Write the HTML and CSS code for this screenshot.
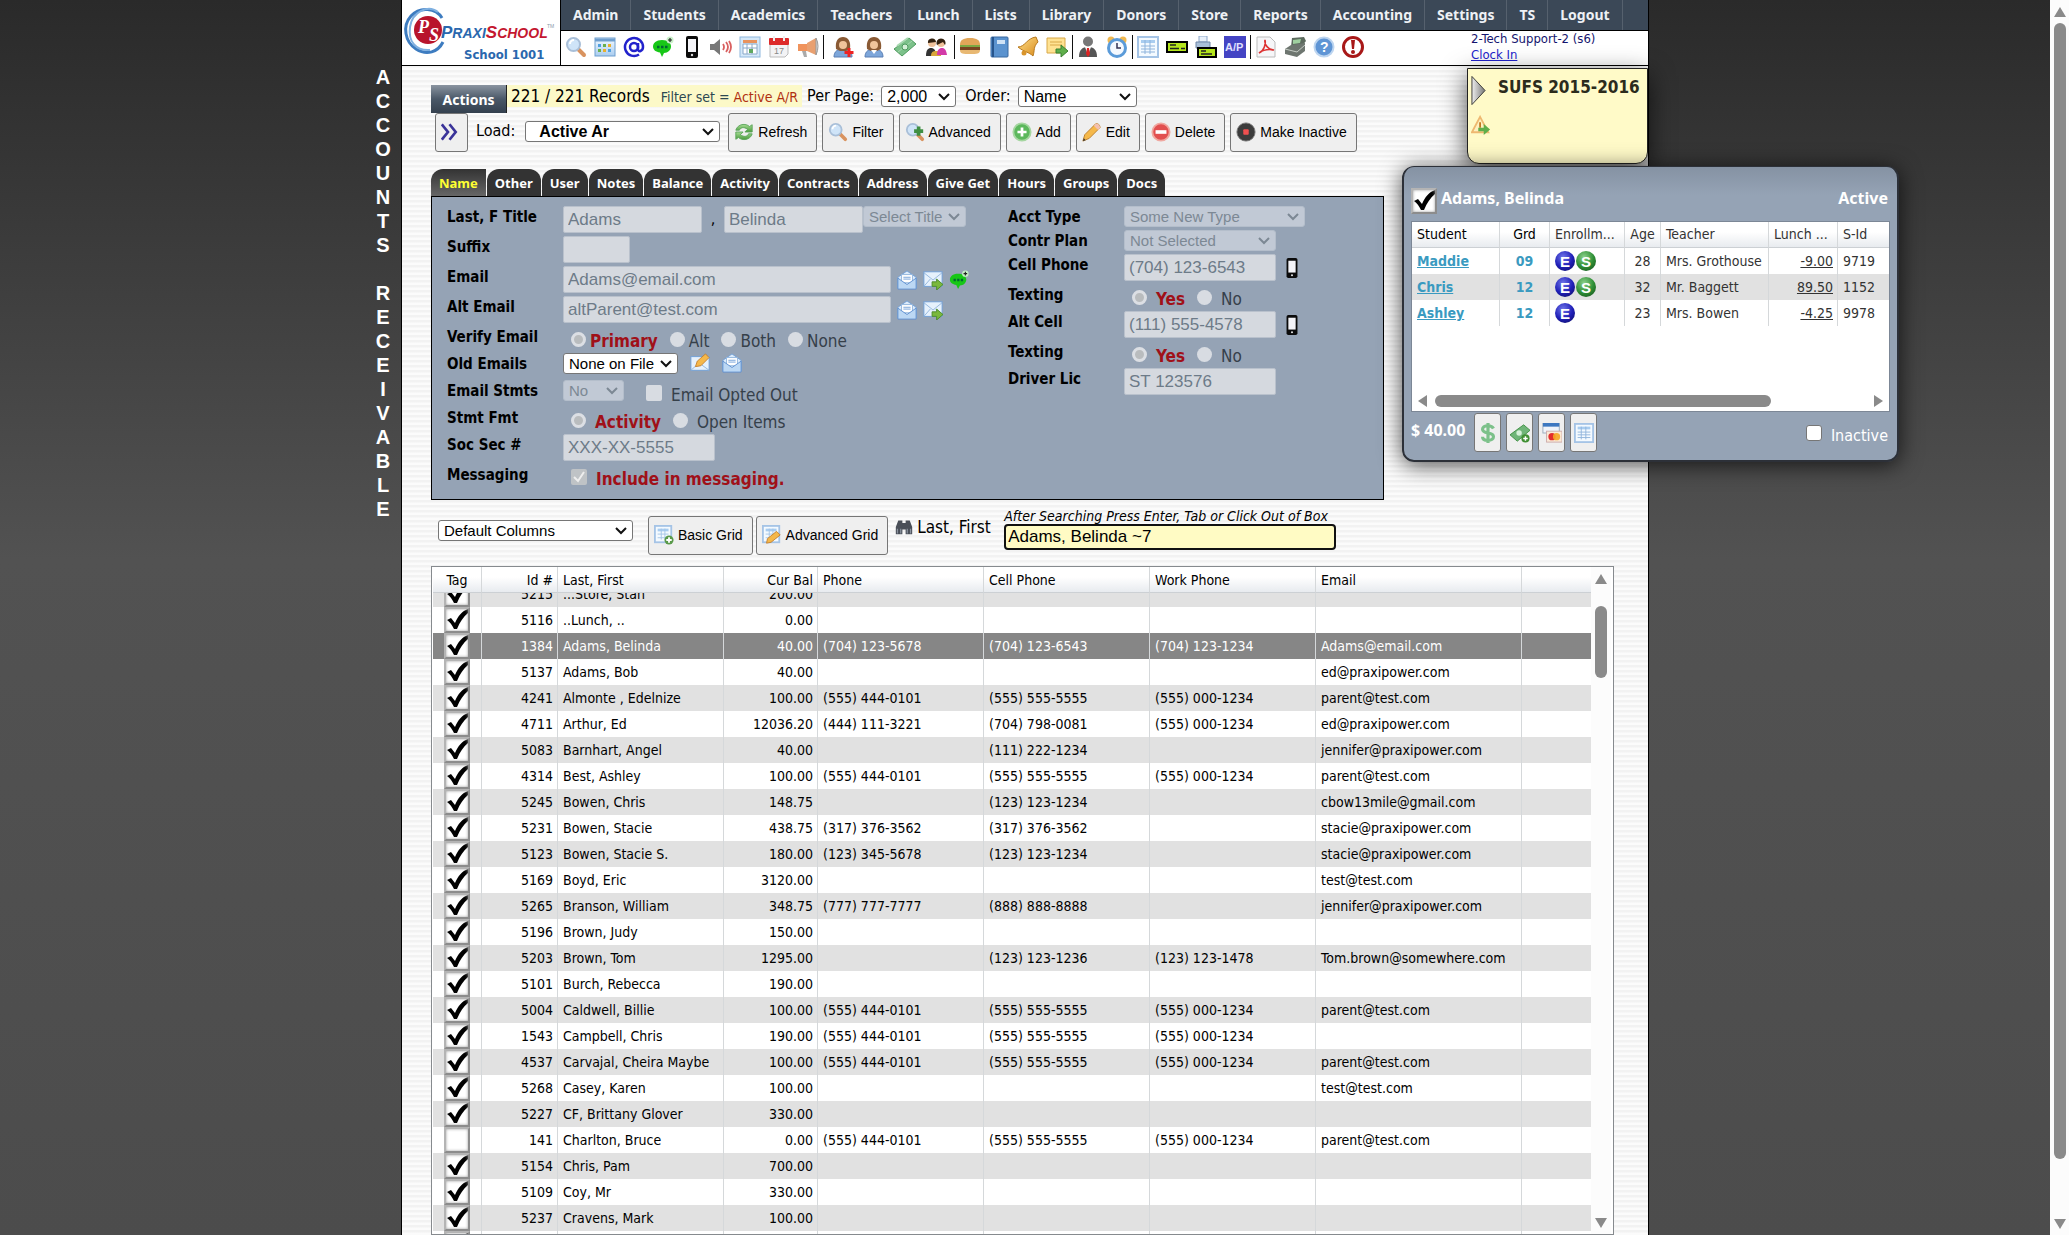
FILE: index.html
```
<!DOCTYPE html>
<html lang="en">
<head>
    <meta charset="UTF-8">
    <meta name="viewport" content="width=device-width, initial-scale=1.0">
    <title>PraxiSchool - Accounts Receivable</title>
    <link rel="stylesheet" href="styles.css">
</head>
<body>
    <svg class="gradients" aria-hidden="true">
        <defs>
            <linearGradient id="gBlue" x1="0" y1="0" x2="0" y2="1"><stop offset="0" stop-color="#f4faff"/><stop offset="1" stop-color="#a9cdf0"/></linearGradient>
            <linearGradient id="gGreen" x1="0" y1="0" x2="0" y2="1"><stop offset="0" stop-color="#a5dc93"/><stop offset="1" stop-color="#4a9a3c"/></linearGradient>
            <linearGradient id="gGold" x1="0" y1="0" x2="1" y2="1"><stop offset="0" stop-color="#ffe08a"/><stop offset="1" stop-color="#d88a1c"/></linearGradient>
            <linearGradient id="gGray" x1="0" y1="0" x2="1" y2="0"><stop offset="0" stop-color="#eee"/><stop offset="1" stop-color="#777"/></linearGradient>
            <radialGradient id="gE" cx="0.4" cy="0.3" r="0.8"><stop offset="0" stop-color="#6f74e8"/><stop offset="0.6" stop-color="#2020b8"/><stop offset="1" stop-color="#101070"/></radialGradient>
            <radialGradient id="gS" cx="0.4" cy="0.3" r="0.8"><stop offset="0" stop-color="#8ad08a"/><stop offset="0.6" stop-color="#2f8f35"/><stop offset="1" stop-color="#1a5a20"/></radialGradient>
        </defs>
    </svg>
    <svg class="sprite" aria-hidden="true">
        <symbol id="i-search" viewBox="0 0 22 22"><path d="M13 13l6 6" stroke="#d9935f" stroke-width="4" stroke-linecap="round"/><circle cx="8.500" cy="8.500" r="6.500" fill="#cfe4f8" stroke="#a9bfd8" stroke-width="2"/><path d="M5 8a4 4 0 0 1 4-4" stroke="#fff" stroke-width="2" fill="none"/></symbol>
        <symbol id="i-searchplus" viewBox="0 0 22 22"><path d="M13 13l6 6" stroke="#d9935f" stroke-width="4" stroke-linecap="round"/><circle cx="8.500" cy="8.500" r="6.500" fill="#cfe4f8" stroke="#a9bfd8" stroke-width="2"/><path d="M15 5v10M10 10h10" stroke="#3f8f43" stroke-width="4"/></symbol>
        <symbol id="i-apps" viewBox="0 0 22 22"><rect x="1" y="2" width="20" height="18" fill="url(#gBlue)" stroke="#6f9fcf"/><path d="M1 4h20" stroke="#6f9fcf" stroke-width="3"/><path d="M4 8h3v3H4zM14 13h3v3h-3z" fill="#4fa0e0"/><path d="M9 8h3v3H9zM4 13h3v3H4z" fill="#6ab04a"/><path d="M14 8h3v3h-3zM9 13h3v3H9z" fill="#e8b030"/></symbol>
        <symbol id="i-at" viewBox="0 0 22 22"><circle cx="11" cy="11" r="4" fill="none" stroke="#2222cc" stroke-width="2.500"/><path d="M15 7v6c0 4 5 2 5-2a9 9 0 1 0-4 7.500" fill="none" stroke="#2222cc" stroke-width="2.500"/></symbol>
        <symbol id="i-chat" viewBox="0 0 22 22"><path d="M10 4c6 0 9 3 9 6.500S16 17 12 17l-2 4-2-4.500C4 16 1 14 1 10.500S4 4 10 4z" fill="#17c717"/><path d="M5 11h2.500M9 11h2.500M13 11h2.500" stroke="#063" stroke-width="2.500"/><circle cx="18" cy="4" r="3.500" fill="#c8f0c8"/><path d="M18 2v4M16 4h4" stroke="#222" stroke-width="1.200"/></symbol>
        <symbol id="i-phone" viewBox="0 0 22 22"><rect x="5" y="0" width="12" height="22" rx="2" fill="#0b0b0b"/><path d="M7 3h8v13H7z" fill="#f4f4f8"/><circle cx="11" cy="19" r="1.200" fill="#ddd"/></symbol>
        <symbol id="i-sound" viewBox="0 0 22 22"><path d="M0 8h4l6-5v16l-6-5H0z" fill="#777"/><path d="M13 8q2 3 0 6M16 6q4 5 0 10M19 5q4 6 0 12" fill="none" stroke="#d96060" stroke-width="1.800"/></symbol>
        <symbol id="i-calblue" viewBox="0 0 22 22"><rect x="1" y="1" width="20" height="20" fill="#d5e8f8" stroke="#8fb8de"/><path d="M4 4h14v3H4z" fill="#e8925c"/><path d="M4 8h14v10H4z" fill="#fff" stroke="#8aa8c8"/><path d="M4 12h14M8 8v10M13 8v10" stroke="#8aa8c8"/><path d="M10 13h4v4h-4z" fill="#5fa860"/></symbol>
        <symbol id="i-cal" viewBox="0 0 22 22"><path d="M2 7h18v11l-3 3H2z" fill="#f3f3f5" stroke="#bbb"/><rect x="1" y="2" width="20" height="7" rx="1" fill="#dd2b2b"/><path d="M6 0v5M16 0v5" stroke="#eee" stroke-width="2"/><text x="6" y="18" font-size="9" font-family="Liberation Sans" fill="#888">17</text></symbol>
        <symbol id="i-horn" viewBox="0 0 22 22"><path d="M1 8h9v7H1z" fill="#f0935c"/><path d="M10 7l9-5v17l-9-4z" fill="#e9a070"/><path d="M19 2q4 8 0 17z" fill="#ddd" stroke="#999"/><path d="M5 15h4l1 6H7z" fill="#aaa"/></symbol>
        <symbol id="i-user" viewBox="0 0 22 22"><path d="M2 21c0-6 4-8 9-8s9 2 9 8z" fill="#7da6da" stroke="#5a7fb4"/><path d="M4 13C3 5 6 1 11 1s8 4 7 12l-4 2H8z" fill="#8a5a34"/><circle cx="11" cy="9" r="4" fill="#f0c49b"/><path d="M8 14l3 4 3-4z" fill="#fff"/></symbol>
        <symbol id="i-useradd" viewBox="0 0 22 22"><path d="M2 21c0-6 4-8 9-8s9 2 9 8z" fill="#7da6da" stroke="#5a7fb4"/><path d="M4 13C3 5 6 1 11 1s8 4 7 12l-4 2H8z" fill="#8a5a34"/><circle cx="11" cy="9" r="4" fill="#f0c49b"/><path d="M17 12v9M12.500 16.500h9" stroke="#e22" stroke-width="3"/></symbol>
        <symbol id="i-money" viewBox="0 0 22 22"><path d="M0 13L15 2l7 6L8 20z" fill="#7cc18a" stroke="#4f9a5e"/><path d="M3 10L14 2" stroke="#a7d9b0" stroke-width="2"/><path d="M4 16L18 5" stroke="#a7d9b0"/><circle cx="11" cy="11" r="3" fill="#d5f0d8" stroke="#4f9a5e"/></symbol>
        <symbol id="i-moneyadd" viewBox="0 0 22 22"><path d="M0 13L15 2l7 6L8 20z" fill="#6fb578" stroke="#3f8f43"/><circle cx="10" cy="11" r="3" fill="#d5f0d8"/><circle cx="17" cy="17" r="4.500" fill="#3f8f33"/><path d="M17 14.500v5M14.500 17h5" stroke="#fff" stroke-width="1.600"/></symbol>
        <symbol id="i-family" viewBox="0 0 22 22"><path d="M1 20c0-6 2-8 5-8s5 2 5 8z" fill="#333"/><path d="M6 20c0-4 2-5 5-5s5 1 5 5z" fill="#d9a53a"/><path d="M12 19c0-5 2-7 5-7s4 2 5 7z" fill="#d33aa8"/><circle cx="7" cy="7" r="4" fill="#efc19a"/><circle cx="16" cy="7" r="4" fill="#efc19a"/><path d="M3 7a4 4 0 0 1 8-1zM12 9a4.500 4.500 0 1 1 8 0l-2-3z" fill="#321"/></symbol>
        <symbol id="i-burger" viewBox="0 0 22 22"><path d="M1 9c0-5 3-7 10-7s10 2 10 7z" fill="#e2a659"/><path d="M1 9h20v2H1z" fill="#7da844"/><path d="M1 11h20v3H1z" fill="#7a4522"/><path d="M1 14h20c0 4-3 4-10 4S1 18 1 14z" fill="#e8b872"/></symbol>
        <symbol id="i-book" viewBox="0 0 22 22"><rect x="3" y="1" width="17" height="20" rx="1" fill="#5b93cf" stroke="#3868a0"/><path d="M5 1v20" stroke="#27558c" stroke-width="2"/><rect x="9" y="4" width="8" height="4" fill="#cfe2f5"/></symbol>
        <symbol id="i-bell" viewBox="0 0 22 22"><path d="M1 11C8 11 10 2 19 1l2 5c-5 5-3 8-5 14C12 16 7 16 1 11z" fill="url(#gGold)" stroke="#b8791c"/><circle cx="7" cy="17" r="2.500" fill="#d9952c"/></symbol>
        <symbol id="i-notego" viewBox="0 0 22 22"><path d="M1 2h18v11l-5 4H1z" fill="#ffe292" stroke="#d8a848"/><path d="M4 6h12M4 9h12" stroke="#d8a848"/><path d="M10 13h5v-4l7 6-7 6v-4h-5z" fill="#5fae4a" stroke="#3a8030"/></symbol>
        <symbol id="i-suit" viewBox="0 0 22 22"><path d="M2 21c0-7 3-10 9-10s9 3 9 10z" fill="#555"/><path d="M8 11h6l-3 8z" fill="#fff"/><path d="M10 12h2l1 6-2 3-2-3z" fill="#d22"/><circle cx="11" cy="5.500" r="5" fill="#777"/></symbol>
        <symbol id="i-clock" viewBox="0 0 22 22"><circle cx="5" cy="4" r="3.500" fill="#f0b850"/><circle cx="17" cy="4" r="3.500" fill="#f0b850"/><circle cx="11" cy="12" r="8.500" fill="#f4f9ff" stroke="#5b9bd9" stroke-width="3"/><path d="M11 7v5h4" fill="none" stroke="#335" stroke-width="1.500"/></symbol>
        <symbol id="i-table" viewBox="0 0 22 22"><rect x="1" y="1" width="20" height="20" fill="#f4faff" stroke="#a5c4e6" stroke-width="2"/><path d="M4 4h14v3H4z" fill="#a9cdf0"/><path d="M4 10h14M4 13h14M4 16h14M8 4v14M13 4v14" stroke="#8fb4dc"/></symbol>
        <symbol id="i-check" viewBox="0 0 22 22"><rect x="1" y="6" width="20" height="10" fill="#b5e61d" stroke="#000" stroke-width="2"/><path d="M4 9h6M4 12.500h9M15 12.500h4" stroke="#222" stroke-width="1.500"/></symbol>
        <symbol id="i-printcheck" viewBox="0 0 22 22"><path d="M4 0h8v6H4z" fill="#e8f0fa" stroke="#8aa5c8"/><path d="M1 6h14v6H1z" fill="#a9bfd8" stroke="#7088a8"/><rect x="3" y="12" width="18" height="9" fill="#b5e61d" stroke="#000" stroke-width="2"/><path d="M6 15h5M6 18h11" stroke="#222" stroke-width="1.500"/></symbol>
        <symbol id="i-ap" viewBox="0 0 22 22"><rect width="22" height="22" fill="#4444c4"/><text x="1" y="15" font-size="11" font-weight="bold" font-family="Liberation Sans" fill="#e0e0ff">A/P</text></symbol>
        <symbol id="i-pdf" viewBox="0 0 22 22"><path d="M2 1h13l5 5v15H2z" fill="#f6f6f8" stroke="#bbb"/><path d="M4 17C9 15 11 8 10 4c-1 5 4 10 9 10-5-1-11 0-15 3z" fill="none" stroke="#d33" stroke-width="1.600"/></symbol>
        <symbol id="i-register" viewBox="0 0 22 22"><path d="M8 2l12-1 2 4-4 5-11 1z" fill="#5c6a5e"/><path d="M9 4l8-1-1 4-7 1z" fill="#9fcf9f"/><path d="M1 13l6-4 14-2v8l-8 6-12-3z" fill="#6e7670"/><path d="M1 13l12 3 8-7" stroke="#c5ccc5" fill="none"/></symbol>
        <symbol id="i-help" viewBox="0 0 22 22"><circle cx="11" cy="11" r="9.500" fill="#5f95d5" stroke="#bdd5f0" stroke-width="2"/><text x="7" y="16" font-size="14" font-weight="bold" font-family="Liberation Sans" fill="#fff">?</text></symbol>
        <symbol id="i-alert" viewBox="0 0 22 22"><circle cx="11" cy="11" r="9.500" fill="#fff" stroke="#a81818" stroke-width="3"/><path d="M9 4h4l-1 9h-2z" fill="#a81818"/><circle cx="11" cy="16" r="2" fill="#a81818"/></symbol>
        <symbol id="i-arrows" viewBox="0 0 22 22"><path d="M1 1l8 10-8 10M11 1l8 10-8 10" fill="none" stroke="#3a3399" stroke-width="3.500"/></symbol>
        <symbol id="i-refresh" viewBox="0 0 22 22"><path d="M2 9c2-7 11-8 15-4l3-2v8h-8l3-3c-4-3-8-2-9 1z" fill="url(#gGreen)" stroke="#5aa55a"/><path d="M20 13c-2 7-11 8-15 4l-3 2v-8h8l-3 3c4 3 8 2 9-1z" fill="url(#gGreen)" stroke="#5aa55a"/></symbol>
        <symbol id="i-add" viewBox="0 0 22 22"><circle cx="11" cy="11" r="9.500" fill="#5cb85c" stroke="#a5d6a0" stroke-width="2"/><path d="M11 6v10M6 11h10" stroke="#fff" stroke-width="3"/></symbol>
        <symbol id="i-delete" viewBox="0 0 22 22"><circle cx="11" cy="11" r="9.500" fill="#e25050" stroke="#f0a8a0" stroke-width="2"/><path d="M5 11h12" stroke="#fff" stroke-width="4"/></symbol>
        <symbol id="i-stop" viewBox="0 0 22 22"><circle cx="11" cy="11" r="10" fill="#3c3c3c" stroke="#777"/><rect x="8" y="8" width="6" height="6" rx="1" fill="#f05050"/></symbol>
        <symbol id="i-pencil" viewBox="0 0 22 22"><path d="M1 21l2-7L15 2q4-1 5 4L8 18z" fill="#f5b84a" stroke="#b87a28"/><path d="M13 4l5 5 2-3q-1-5-5-4z" fill="#f2c0b0"/><path d="M1 21l1-3 2 2z" fill="#333"/></symbol>
        <symbol id="i-tableadd" viewBox="0 0 22 22"><rect x="1" y="1" width="18" height="18" fill="#f4faff" stroke="#a5c4e6" stroke-width="2"/><path d="M4 4h12v3H4z" fill="#a9cdf0"/><path d="M4 10h12M4 14h12M8 4v12M12 4v12" stroke="#a5c4e6"/><circle cx="16.500" cy="16.500" r="5" fill="#5a9a4a"/><path d="M16.500 13.500v6M13.500 16.500h6" stroke="#fff" stroke-width="2"/></symbol>
        <symbol id="i-tableedit" viewBox="0 0 22 22"><rect x="1" y="1" width="18" height="18" fill="#f4faff" stroke="#a5c4e6" stroke-width="2"/><path d="M4 4h12v3H4z" fill="#a9cdf0"/><path d="M4 10h12M4 14h12M8 4v12M12 4v12" stroke="#a5c4e6"/><path d="M5 20l1-5L16 7l4 4-10 8z" fill="#f5b84a" stroke="#c58030"/></symbol>
        <symbol id="i-mail" viewBox="0 0 22 22"><path d="M1 8l10-7 10 7v12H1z" fill="#dcebfa" stroke="#6f9fd8"/><path d="M5 5h12v9H5z" fill="#fff" stroke="#8fb4dc"/><path d="M7 8h8M7 10h8" stroke="#6f9fd8"/><path d="M1 9l10 7 10-7v12H1z" fill="#bcd8f4" stroke="#5f8fd0"/></symbol>
        <symbol id="i-mailgo" viewBox="0 0 22 22"><rect x="1" y="2" width="20" height="16" fill="#e6f1fc" stroke="#6f9fd8"/><path d="M1 3l10 8 10-8M1 18l7-8M21 18l-7-8" fill="none" stroke="#8fb4dc"/><path d="M10 13h5v-3l7 6-7 6v-4h-5z" fill="#7ab83c" stroke="#4a8a28"/></symbol>
        <symbol id="i-mailedit" viewBox="0 0 22 22"><rect x="1" y="4" width="20" height="15" fill="#e6f1fc" stroke="#6f9fd8"/><path d="M1 19l9-8 11 8" fill="none" stroke="#8fb4dc"/><path d="M6 15l2-6L17 1l4 4-9 9z" fill="#f5b84a" stroke="#c58030"/></symbol>
        <symbol id="i-binoc" viewBox="0 0 22 22"><path d="M4 3h5v3h4V3h5l3 8v9h-8v-6H9v6H1v-9z" fill="#4a4f58"/><path d="M3 13v6M7 13v6M15 13v6M19 13v6" stroke="#8a929e" stroke-width="1.500"/></symbol>
        <symbol id="i-dollar" viewBox="0 0 22 22"><path d="M17 6c-1-2-3-3-6-3-4 0-6 2-6 4 0 6 12 2 12 8 0 2-2 4-6 4-3 0-6-1-6-4M11 0v22" fill="none" stroke="#7cc18a" stroke-width="3.500"/></symbol>
        <symbol id="i-cards" viewBox="0 0 22 22"><rect x="1" y="0" width="18" height="11" fill="#f0f4fa" stroke="#9ab"/><path d="M1 0h18v4H1z" fill="#3d78c0"/><rect x="5" y="9" width="17" height="12" fill="#fbe9d5" stroke="#caa"/><circle cx="11" cy="15" r="4" fill="#e22c2c"/><circle cx="16" cy="15" r="4" fill="#f5a623" opacity="0.900"/></symbol>
        <symbol id="i-warngo" viewBox="0 0 22 22"><path d="M10 2l9 17H1z" fill="#fdf0c0" stroke="#eeb870" stroke-width="2"/><path d="M10 8v6" stroke="#c07820" stroke-width="2"/><path d="M8 14h6v-4l7 6-7 6v-4H8z" fill="#5fae4a"/></symbol>
        <symbol id="i-play" viewBox="0 0 16 32"><path d="M1 1l14 15L1 31z" fill="url(#gGray)" stroke="#333"/></symbol>
        <symbol id="i-e" viewBox="0 0 20 20"><circle cx="10" cy="10" r="10" fill="url(#gE)"/><text x="5" y="15.500" font-size="15" font-weight="bold" font-family="Liberation Sans" fill="#fff">E</text></symbol>
        <symbol id="i-s" viewBox="0 0 20 20"><circle cx="10" cy="10" r="10" fill="url(#gS)"/><text x="5" y="15.500" font-size="15" font-weight="bold" font-family="Liberation Sans" fill="#fff">S</text></symbol>
    </svg>

    <div class="page">
        <aside class="gutter">
            <div class="side-title">A
C
C
O
U
N
T
S

R
E
C
E
I
V
A
B
L
E</div>
        </aside>

        <div class="column">
            <header>
                <div class="logo">
                    <svg width="156" height="62" viewBox="0 0 156 62" role="img" aria-label="PraxiSchool School 1001">
                        <circle cx="26" cy="30" r="14" fill="#b8142c"/>
                        <path d="M40 18C34 8 18 6 9 16S3 42 14 49s22 3 27-7" fill="none" stroke="#3d7cc0" stroke-width="3"/>
                        <path d="M36 12C26 4 10 12 8 27s6 24 20 23" fill="none" stroke="#7fb0e0" stroke-width="2"/>
                        <text class="logo-mark" x="16" y="33">P</text>
                        <text class="logo-mark" x="27" y="41">S</text>
                        <text class="logo-word" x="39" y="38"><tspan fill="#2a67ad">P</tspan><tspan class="logo-small" fill="#2a67ad">RAXI</tspan><tspan fill="#c4172f">S</tspan><tspan class="logo-small" fill="#c4172f">CHOOL</tspan></text>
                        <text class="logo-tm" x="145" y="28">TM</text>
                        <text class="logo-school" x="62" y="59">School 1001</text>
                    </svg>
                </div>
                <div class="header-main">
                    <nav>
                        <a href="#">Admin</a>
                        <a href="#">Students</a>
                        <a href="#">Academics</a>
                        <a href="#">Teachers</a>
                        <a href="#">Lunch</a>
                        <a href="#">Lists</a>
                        <a href="#">Library</a>
                        <a href="#">Donors</a>
                        <a href="#">Store</a>
                        <a href="#">Reports</a>
                        <a href="#">Accounting</a>
                        <a href="#">Settings</a>
                        <a href="#">TS</a>
                        <a href="#">Logout</a>
                    </nav>
                    <div class="icon-row">
                        <div class="icon-group">
                            <button title="Search"><svg><use href="#i-search"/></svg></button>
                            <button title="Dashboard"><svg><use href="#i-apps"/></svg></button>
                            <button title="Email"><svg><use href="#i-at"/></svg></button>
                            <button title="Chat"><svg><use href="#i-chat"/></svg></button>
                            <button title="Text"><svg><use href="#i-phone"/></svg></button>
                            <button title="Voice"><svg><use href="#i-sound"/></svg></button>
                            <button title="Schedule"><svg><use href="#i-calblue"/></svg></button>
                            <button title="Calendar"><svg><use href="#i-cal"/></svg></button>
                            <button title="Announce"><svg><use href="#i-horn"/></svg></button>
                        </div>
                        <div class="icon-group people">
                            <button title="Add Student"><svg><use href="#i-useradd"/></svg></button>
                            <button title="Student"><svg><use href="#i-user"/></svg></button>
                            <button title="Payments"><svg><use href="#i-money"/></svg></button>
                            <button title="Family"><svg><use href="#i-family"/></svg></button>
                        </div>
                        <div class="icon-group">
                            <button title="Lunch"><svg><use href="#i-burger"/></svg></button>
                            <button title="Library"><svg><use href="#i-book"/></svg></button>
                            <button title="Bell"><svg><use href="#i-bell"/></svg></button>
                            <button title="Notes"><svg><use href="#i-notego"/></svg></button>
                        </div>
                        <div class="icon-group">
                            <button title="Staff"><svg><use href="#i-suit"/></svg></button>
                            <button title="Time Clock"><svg><use href="#i-clock"/></svg></button>
                        </div>
                        <div class="icon-group">
                            <button title="Ledger"><svg><use href="#i-table"/></svg></button>
                            <button title="Checks"><svg><use href="#i-check"/></svg></button>
                            <button title="Print Checks"><svg><use href="#i-printcheck"/></svg></button>
                            <button title="Payables"><svg><use href="#i-ap"/></svg></button>
                        </div>
                        <div class="icon-group">
                            <button title="PDF"><svg><use href="#i-pdf"/></svg></button>
                            <button title="Register"><svg><use href="#i-register"/></svg></button>
                            <button title="Help"><svg><use href="#i-help"/></svg></button>
                            <button title="Alert"><svg><use href="#i-alert"/></svg></button>
                        </div>
                        <div class="login">
                            <div>2-Tech Support-2 (s6)</div>
                            <a href="#">Clock In</a>
                        </div>
                    </div>
                </div>
            </header>

            <main>
                <div class="toolbar">
                    <button class="actions">Actions</button>
                    <div class="records">221 / 221 Records <span class="filter">Filter set = <b>Active A/R</b></span></div>
                    <label for="perPage">Per Page:</label>
                    <select id="perPage" class="per-page"><option>2,000</option></select>
                    <label for="order">Order:</label>
                    <select id="order" class="order"><option>Name</option></select>
                </div>
                <div class="buttons">
                    <button class="btn more" title="More"><svg><use href="#i-arrows"/></svg></button>
                    <label for="load">Load:</label>
                    <select id="load" class="load"><option>Active Ar</option></select>
                    <button class="btn"><svg><use href="#i-refresh"/></svg>Refresh</button>
                    <button class="btn"><svg><use href="#i-search"/></svg>Filter</button>
                    <button class="btn"><svg><use href="#i-searchplus"/></svg>Advanced</button>
                    <button class="btn"><svg><use href="#i-add"/></svg>Add</button>
                    <button class="btn"><svg><use href="#i-pencil"/></svg>Edit</button>
                    <button class="btn"><svg><use href="#i-delete"/></svg>Delete</button>
                    <button class="btn"><svg><use href="#i-stop"/></svg>Make Inactive</button>
                </div>

                <div class="tabs">
                    <button class="active">Name</button>
                    <button>Other</button>
                    <button>User</button>
                    <button>Notes</button>
                    <button>Balance</button>
                    <button>Activity</button>
                    <button>Contracts</button>
                    <button>Address</button>
                    <button>Give Get</button>
                    <button>Hours</button>
                    <button>Groups</button>
                    <button>Docs</button>
                </div>

                <form class="panel">
                    <div class="fields">
                        <div class="row">
                            <label for="last">Last, F Title</label>
                            <input type="text" id="last" class="w-name" value="Adams" disabled>
                            <span class="comma">,</span>
                            <input type="text" class="w-name" aria-label="First" value="Belinda" disabled>
                            <select class="w-title" aria-label="Title" disabled><option>Select Title</option></select>
                        </div>
                        <div class="row">
                            <label for="suffix">Suffix</label>
                            <input type="text" id="suffix" class="w-suffix" disabled>
                        </div>
                        <div class="row">
                            <label for="email">Email</label>
                            <input type="text" id="email" class="w-email" value="Adams@email.com" disabled>
                            <svg class="ic"><use href="#i-mail"/></svg>
                            <svg class="ic"><use href="#i-mailgo"/></svg>
                            <svg class="ic"><use href="#i-chat"/></svg>
                        </div>
                        <div class="row">
                            <label for="altEmail">Alt Email</label>
                            <input type="text" id="altEmail" class="w-email" value="altParent@test.com" disabled>
                            <svg class="ic"><use href="#i-mail"/></svg>
                            <svg class="ic"><use href="#i-mailgo"/></svg>
                        </div>
                        <div class="row short">
                            <span class="name">Verify Email</span>
                            <label class="choice on"><input type="radio" name="verify" checked disabled>Primary</label>
                            <label class="choice"><input type="radio" name="verify" disabled>Alt</label>
                            <label class="choice"><input type="radio" name="verify" disabled>Both</label>
                            <label class="choice"><input type="radio" name="verify" disabled>None</label>
                        </div>
                        <div class="row short">
                            <label for="oldEmails">Old Emails</label>
                            <select id="oldEmails" class="w-old"><option>None on File</option></select>
                            <svg class="ic spaced"><use href="#i-mailedit"/></svg>
                            <svg class="ic spaced"><use href="#i-mail"/></svg>
                        </div>
                        <div class="row short">
                            <label for="stmts">Email Stmts</label>
                            <select id="stmts" class="w-no" disabled><option>No</option></select>
                            <label class="choice wide after-select"><input type="checkbox" disabled>Email Opted Out</label>
                        </div>
                        <div class="row short">
                            <span class="name">Stmt Fmt</span>
                            <label class="choice wide on"><input type="radio" name="fmt" checked disabled>Activity</label>
                            <label class="choice wide"><input type="radio" name="fmt" disabled>Open Items</label>
                        </div>
                        <div class="row">
                            <label for="ssn">Soc Sec #</label>
                            <input type="text" id="ssn" class="w-phone" value="XXX-XX-5555" disabled>
                        </div>
                        <div class="row">
                            <span class="name">Messaging</span>
                            <label class="choice wide on"><input type="checkbox" checked disabled>Include in messaging.</label>
                        </div>
                    </div>
                    <div class="fields contact">
                        <div class="row tight">
                            <label for="acctType">Acct Type</label>
                            <select id="acctType" class="w-acct" disabled><option>Some New Type</option></select>
                        </div>
                        <div class="row tight">
                            <label for="contrPlan">Contr Plan</label>
                            <select id="contrPlan" class="w-phone" disabled><option>Not Selected</option></select>
                        </div>
                        <div class="row">
                            <label for="cell">Cell Phone</label>
                            <input type="text" id="cell" class="w-phone" value="(704) 123-6543" disabled>
                            <svg class="ic"><use href="#i-phone"/></svg>
                        </div>
                        <div class="row short">
                            <span class="name">Texting</span>
                            <label class="choice wide on"><input type="radio" name="text1" checked disabled>Yes</label>
                            <label class="choice wide"><input type="radio" name="text1" disabled>No</label>
                        </div>
                        <div class="row">
                            <label for="altCell">Alt Cell</label>
                            <input type="text" id="altCell" class="w-phone" value="(111) 555-4578" disabled>
                            <svg class="ic"><use href="#i-phone"/></svg>
                        </div>
                        <div class="row short">
                            <span class="name">Texting</span>
                            <label class="choice wide on"><input type="radio" name="text2" checked disabled>Yes</label>
                            <label class="choice wide"><input type="radio" name="text2" disabled>No</label>
                        </div>
                        <div class="row">
                            <label for="license">Driver Lic</label>
                            <input type="text" id="license" class="w-phone" value="ST 123576" disabled>
                        </div>
                    </div>
                </form>

                <div class="grid-bar">
                    <select class="columns" aria-label="Columns"><option>Default Columns</option></select>
                    <div class="grid-buttons">
                        <button class="btn"><svg><use href="#i-tableadd"/></svg>Basic Grid</button>
                        <button class="btn"><svg><use href="#i-tableedit"/></svg>Advanced Grid</button>
                    </div>
                    <label class="find" for="find"><svg><use href="#i-binoc"/></svg>Last, First</label>
                    <div class="find-box">
                        <i>After Searching Press Enter, Tab or Click Out of Box</i>
                        <input type="text" id="find" value="Adams, Belinda ~7">
                    </div>
                </div>

                <div class="grid">
                    <div class="grid-scroll" id="gridScroll">
                        <table>
                            <colgroup>
                                <col class="c-tag"><col class="c-id"><col class="c-name"><col class="c-bal">
                                <col class="c-phone"><col class="c-phone"><col class="c-phone"><col class="c-email"><col>
                            </colgroup>
                            <thead>
                                <tr>
                                    <th class="center">Tag</th>
                                    <th class="num">Id #</th>
                                    <th>Last, First</th>
                                    <th class="num">Cur Bal</th>
                                    <th>Phone</th>
                                    <th>Cell Phone</th>
                                    <th>Work Phone</th>
                                    <th>Email</th>
                                    <th></th>
                                </tr>
                            </thead>
                            <tbody id="accounts"></tbody>
                        </table>
                    </div>
                    <div class="vbar">
                        <span class="up"></span>
                        <span class="thumb"></span>
                        <span class="down"></span>
                    </div>
                </div>
            </main>

            <div class="note">
                <svg class="play"><use href="#i-play"/></svg>
                <b>SUFS 2015-2016</b>
                <svg class="ic"><use href="#i-warngo"/></svg>
            </div>

            <section class="popup">
                <div class="popup-head">
                    <input type="checkbox" class="tag" id="popupTag" checked>
                    <label for="popupTag">Adams, Belinda</label>
                    <span>Active</span>
                </div>
                <div class="students">
                    <table>
                        <colgroup>
                            <col class="s-name"><col class="s-grade"><col class="s-enroll"><col class="s-age">
                            <col class="s-teacher"><col class="s-lunch"><col>
                        </colgroup>
                        <thead>
                            <tr>
                                <th class="dark">Student</th>
                                <th class="dark center">Grd</th>
                                <th>Enrollm...</th>
                                <th class="center">Age</th>
                                <th>Teacher</th>
                                <th>Lunch ...</th>
                                <th>S-Id</th>
                            </tr>
                        </thead>
                        <tbody>
                            <tr>
                                <td><a href="#">Maddie</a></td>
                                <td class="grade">09</td>
                                <td><svg><use href="#i-e"/></svg><svg><use href="#i-s"/></svg></td>
                                <td class="center">28</td>
                                <td>Mrs. Grothouse</td>
                                <td class="num"><u>-9.00</u></td>
                                <td>9719</td>
                            </tr>
                            <tr>
                                <td><a href="#">Chris</a></td>
                                <td class="grade">12</td>
                                <td><svg><use href="#i-e"/></svg><svg><use href="#i-s"/></svg></td>
                                <td class="center">32</td>
                                <td>Mr. Baggett</td>
                                <td class="num"><u>89.50</u></td>
                                <td>1152</td>
                            </tr>
                            <tr>
                                <td><a href="#">Ashley</a></td>
                                <td class="grade">12</td>
                                <td><svg><use href="#i-e"/></svg></td>
                                <td class="center">23</td>
                                <td>Mrs. Bowen</td>
                                <td class="num"><u>-4.25</u></td>
                                <td>9978</td>
                            </tr>
                        </tbody>
                    </table>
                    <div class="hbar">
                        <span class="left"></span>
                        <div class="track"><span class="thumb"></span></div>
                        <span class="right"></span>
                    </div>
                </div>
                <div class="popup-foot">
                    <b>$ 40.00</b>
                    <button class="btn" title="Payment"><svg><use href="#i-dollar"/></svg></button>
                    <button class="btn" title="Add Payment"><svg><use href="#i-moneyadd"/></svg></button>
                    <button class="btn" title="Card"><svg><use href="#i-cards"/></svg></button>
                    <button class="btn" title="Ledger"><svg><use href="#i-table"/></svg></button>
                    <label class="inactive"><input type="checkbox">Inactive</label>
                </div>
            </section>
        </div>

        <div class="gutter"></div>
        <div class="vbar page-bar">
            <span class="up"></span>
            <span class="thumb"></span>
            <span class="down"></span>
        </div>
    </div>
    <script src="script.js"></script>
</body>
</html>
```

FILE: styles.css
```
* {
    box-sizing: border-box;
}
body {
    font-family: "DejaVu Sans Condensed", "Noto Sans", Tahoma, sans-serif;
    font-size: 14px;
    margin: 0;
    background: #4c4c4c linear-gradient(#2a2a2a, #525252 560px, #4c4c4c);
    color: #000;
}
.gradients {
    position: absolute;
    width: 0;
    height: 0;
}
.sprite {
    display: none;
}
button, input, select {
    font-family: "Liberation Sans", Arial, sans-serif;
    margin: 0;
}
.page {
    display: flex;
    height: 100vh;
    overflow: hidden;
}
.gutter {
    flex: 1;
}
.side-title {
    white-space: pre-line;
    text-align: center;
    width: 20px;
    margin: 65px 8px 0 auto;
    font-family: "Liberation Sans", Arial, sans-serif;
    font-size: 20px;
    font-weight: bold;
    line-height: 24px;
    color: #fff;
}
.column {
    position: relative;
    width: 1248px;
    max-width: 100%;
    display: flex;
    flex-direction: column;
    border-left: 1px solid #000;
    border-right: 1px solid #000;
    background: repeating-linear-gradient(#f2f2f2 0, #f2f2f2 2px, #fbfbfb 3px, #fbfbfb 5px);
}

/* header */
header {
    display: flex;
    height: 66px;
    flex: none;
    background: #fff;
    border-bottom: 1px solid #000;
}
.logo {
    width: 159px;
    border-right: 1px solid #000;
}
.logo-mark {
    font: italic bold 18px "Liberation Serif", serif;
    fill: #fff;
}
.logo-word {
    font: italic bold 17px "Liberation Sans", sans-serif;
}
.logo-small {
    font-size: 14px;
}
.logo-tm {
    font: 5px "Liberation Sans", sans-serif;
    fill: #89a;
}
.logo-school {
    font: bold 13px "DejaVu Sans Condensed", sans-serif;
    fill: #2a67ad;
}
.header-main {
    flex: 1;
}
nav {
    display: flex;
    height: 31px;
    background: #3b4857;
    border-bottom: 1px solid #000;
}
nav a {
    padding: 0 12px;
    line-height: 30px;
    font-family: "Noto Sans", Tahoma, sans-serif;
    font-size: 14px;
    font-weight: bold;
    color: #eef1f5;
    text-decoration: none;
    border-right: 1px solid #56616e;
}
.icon-row {
    display: flex;
    height: 32px;
    align-items: center;
}
.icon-group {
    display: flex;
    border-right: 1px solid #111;
    padding: 0 1px 0 0;
}
.icon-group:nth-child(6) {
    border-right: none;
}
.icon-group button {
    width: 29px;
    height: 24px;
    padding: 0;
    border: none;
    background: none;
    cursor: pointer;
}
.icon-group.people {
    padding: 0 3px;
}
.icon-group.people button {
    width: 31px;
}
.icon-group svg {
    width: 22px;
    height: 22px;
    display: block;
    margin: auto;
}
.login {
    margin-left: auto;
    width: 177px;
    font-size: 13px;
    line-height: 16px;
    color: #14146e;
}
.login a {
    color: #2222cc;
}

/* toolbar */
main {
    flex: 1;
    min-height: 0;
    display: flex;
    flex-direction: column;
    padding: 19px 34px 0 29px;
}
select {
    appearance: none;
    height: 21px;
    padding: 0 20px 0 5px;
    border: 1px solid #767676;
    border-radius: 3px;
    color: #000;
    font-size: 15px;
    background: #fff url("data:image/svg+xml,%3Csvg xmlns='http://www.w3.org/2000/svg' width='12' height='8'%3E%3Cpath d='M1 1l5 5 5-5' fill='none' stroke='%23111' stroke-width='2'/%3E%3C/svg%3E") no-repeat right 5px center;
}
select:disabled {
    color: #7c8894;
    border-color: #b4becb;
    opacity: 1;
    background-color: #c1c9d5;
    background-image: url("data:image/svg+xml,%3Csvg xmlns='http://www.w3.org/2000/svg' width='12' height='8'%3E%3Cpath d='M1 1l5 5 5-5' fill='none' stroke='%237c8894' stroke-width='2'/%3E%3C/svg%3E");
}
.toolbar {
    display: flex;
    height: 28px;
    font-size: 17px;
    line-height: 22px;
}
.toolbar label {
    margin: 0 7px 0 5px;
    font-size: 16px;
}
.toolbar select {
    margin: 1px 4px 0 0;
    font-size: 16px;
}
.actions {
    width: 76px;
    border: none;
    border-right: 1px solid #222;
    background: linear-gradient(#8a94a0, #4a5868 50%, #34404e);
    color: #fff;
    font: bold 14px "Noto Sans", Tahoma, sans-serif;
}
.records {
    height: 22px;
    padding: 0 4px;
    background: #fcf9c8;
}
.filter {
    margin-left: 6px;
    font-size: 14px;
    color: #2c4852;
}
.filter b {
    font-weight: normal;
    color: #b03010;
}
.per-page {
    width: 75px;
}
.order {
    width: 119px;
}
.buttons {
    display: flex;
    gap: 5px;
    padding-left: 4px;
    font-size: 16px;
    line-height: 36px;
}
.buttons label {
    margin: 0 5px 0 3px;
}
.load {
    width: 195px;
    margin: 8px 3px 0 0;
    padding-left: 13px;
    font-size: 16px;
    font-weight: bold;
}
.btn {
    display: flex;
    align-items: center;
    gap: 4px;
    height: 39px;
    padding: 0 9px 2px 5px;
    border: 1px solid #767676;
    border-radius: 3px;
    background: #efefef;
    color: #000;
    font-size: 14px;
    white-space: nowrap;
}
.btn svg {
    width: 20px;
    height: 20px;
}
.btn.more {
    width: 33px;
}

/* tabs */
.tabs {
    display: flex;
    gap: 1px;
    margin-top: 17px;
}
.tabs button {
    height: 27px;
    padding: 0 8px;
    border: none;
    border-radius: 12px 12px 0 0;
    background: #333;
    color: #fff;
    font: bold 13px "Noto Sans", Tahoma, sans-serif;
    cursor: pointer;
}
.tabs .active {
    border-radius: 12px 0 0 0;
    background: linear-gradient(#333, #666);
    color: #ff3;
}

/* account form */
.panel {
    display: flex;
    width: 953px;
    max-width: 100%;
    height: 304px;
    padding: 9px 15px;
    border: 1px solid #000;
    background: #95a3b5;
}
.fields {
    width: 561px;
}
.fields.contact {
    width: 340px;
}
.row {
    display: flex;
    height: 30px;
    align-items: flex-start;
    font-size: 16px;
}
.row.short {
    height: 27px;
}
.row.tight {
    height: 24px;
}
.row > label:first-child, .row > .name {
    width: 116px;
    line-height: 22px;
    font-size: 15px;
    font-weight: bold;
}
.row input[type="text"] {
    height: 27px;
    padding: 0 4px;
    border: 1px solid #b9c1cc;
    border-radius: 2px;
    background: #d5d9df;
    color: #6d7b88;
    font-size: 17px;
}
.row .w-name {
    width: 139px;
}
.row .w-suffix {
    width: 67px;
}
.row .w-email {
    width: 328px;
}
.row .w-phone {
    width: 152px;
}
.w-title {
    width: 103px;
}
.w-acct {
    width: 181px;
}
.w-old {
    width: 115px;
}
.w-no {
    width: 61px;
}
.comma {
    width: 22px;
    text-align: center;
    line-height: 26px;
}
.ic {
    width: 20px;
    height: 20px;
    margin: 4px 0 0 6px;
}
.ic.spaced {
    margin: 0 0 0 12px;
}
.choice {
    display: flex;
    align-items: center;
    gap: 4px;
    margin-left: 12px;
    line-height: 30px;
    color: #36404a;
    font-size: 17px;
}
.name + .choice {
    margin-left: 8px;
}
.choice.wide {
    gap: 9px;
}
.choice.after-select {
    margin-left: 22px;
}
.choice.on {
    color: #a01018;
    font-weight: bold;
}
.choice input {
    appearance: none;
    width: 16px;
    height: 16px;
    margin: 0 0 4px;
    border-radius: 2px;
    background: #d8dce2;
}
.choice input[type="radio"] {
    width: 15px;
    height: 15px;
    border-radius: 50%;
}
.choice input[type="radio"]:checked {
    border: 3px solid #dcdfe4;
    background: #b9bcbe;
}
.choice input[type="checkbox"]:checked {
    background: #bfc3c6 url("data:image/svg+xml,%3Csvg xmlns='http://www.w3.org/2000/svg' width='16' height='16'%3E%3Cpath d='M3 8l4 4 6-9' fill='none' stroke='%23eee' stroke-width='2'/%3E%3C/svg%3E") center;
}

/* grid tools */
.grid-bar {
    display: flex;
    align-items: flex-start;
    flex: none;
    height: 58px;
    margin-top: 8px;
    padding-left: 7px;
}
.columns {
    width: 195px;
    margin-top: 12px;
}
.grid-buttons {
    display: flex;
    gap: 3px;
    margin: 8px 7px 0 15px;
}
.find {
    display: flex;
    align-items: center;
    gap: 4px;
    width: 109px;
    height: 38px;
    font-size: 17px;
    white-space: nowrap;
}
.find svg {
    width: 18px;
    height: 18px;
}
.find-box {
    width: 332px;
    font-size: 14px;
    line-height: 16px;
}
.find-box i {
    display: block;
    white-space: nowrap;
}
.find-box input {
    width: 100%;
    height: 26px;
    padding: 0 2px;
    border: 2px solid #111;
    border-radius: 4px;
    outline: none;
    background: #fffbc4;
    font-size: 17px;
}

/* grids */
table {
    width: 100%;
    table-layout: fixed;
    border-collapse: separate;
    border-spacing: 0;
}
th, td {
    height: 26px;
    padding: 0 5px;
    overflow: hidden;
    white-space: nowrap;
    text-align: left;
    font-weight: normal;
    border-right: 1px solid #d5d8da;
}
th:last-child, td:last-child {
    border-right: none;
}
th {
    background: linear-gradient(#fff 40%, #e8ebef);
    border-bottom: 1px solid #ccd0d4;
}
.num {
    text-align: right;
    padding-right: 4px;
}
.center {
    text-align: center;
}
.grid {
    flex: 1;
    min-height: 0;
    display: flex;
    padding: 0 2px 0 1px;
    border: 1px solid #868a8e;
    background: #fff;
}
.grid-scroll {
    flex: 1;
    overflow: auto;
    scrollbar-width: none;
}
.grid th {
    position: sticky;
    top: 0;
    z-index: 1;
}
tbody tr {
    background: #fff;
}
.grid tbody tr:nth-child(odd), .students tbody tr:nth-child(even) {
    background: #e1e1e1;
}
.grid tbody tr.selected {
    background: #868686;
    color: #fff;
}
.c-tag {
    width: 49px;
}
.c-id {
    width: 76px;
}
.c-name, .c-phone {
    width: 166px;
}
.c-bal {
    width: 94px;
}
.c-email {
    width: 206px;
}
.tag {
    appearance: none;
    display: block;
    width: 26px;
    height: 26px;
    margin: 0 auto;
    border: 2px solid #8c8c8c;
    border-left-color: #b4b4b4;
    border-top-color: #b4b4b4;
    background: #fff;
    box-shadow: inset 0 0 3px #999;
}
.tag:checked {
    background: #fff url("data:image/svg+xml,%3Csvg xmlns='http://www.w3.org/2000/svg' width='22' height='22'%3E%3Cpath d='M1 11l4-2 4 5C12 7 16 2 22 0v4c-5 4-8 9-11 16H8C6 16 4 13 1 11z'/%3E%3C/svg%3E") center no-repeat;
}

/* drawn scroll bars */
.vbar {
    display: flex;
    flex-direction: column;
    align-items: center;
    width: 20px;
    padding: 7px 0 6px;
    background: #fcfcfc;
}
.up, .down {
    border: 6px solid transparent;
}
.up {
    border-top: none;
    border-bottom: 10px solid #8a8a8a;
}
.down {
    margin-top: auto;
    border-bottom: none;
    border-top: 10px solid #8a8a8a;
}
.vbar .thumb {
    width: 12px;
    height: 72px;
    margin-top: 22px;
    border-radius: 6px;
    background: #8a8a8a;
}
.page-bar {
    width: 19px;
}
.page-bar .thumb {
    flex: 0 1 93%;
    margin-top: 6px;
}
.hbar {
    display: flex;
    align-items: center;
    margin-top: auto;
    padding: 4px 6px;
}
.left, .right {
    border: 6px solid transparent;
}
.left {
    border-left: none;
    border-right: 9px solid #8a8a8a;
}
.right {
    border-right: none;
    border-left: 9px solid #8a8a8a;
}
.track {
    flex: 1;
    margin: 0 8px;
}
.track .thumb {
    display: block;
    width: 78%;
    height: 12px;
    border-radius: 6px;
    background: #8a8a8a;
}

/* sticky note and family popup float over the page */
.note {
    position: absolute;
    top: 68px;
    right: 0;
    display: grid;
    grid-template-columns: 27px 1fr;
    grid-template-rows: 38px 30px;
    width: 181px;
    height: 96px;
    padding: 6px 0 0 3px;
    border: 1px solid #222;
    border-radius: 0 0 12px 12px;
    background: #fffac8;
    box-shadow: 0 8px 26px rgba(0, 0, 0, 0.7);
    font-size: 17px;
    color: #2b2b1c;
}
.note b {
    line-height: 24px;
    white-space: nowrap;
}
.note .play {
    width: 15px;
    height: 31px;
}
.note .ic {
    margin: 2px 0 0;
}
.popup {
    position: absolute;
    top: 166px;
    left: 1000px;
    display: flex;
    flex-direction: column;
    width: 497px;
    height: 296px;
    padding: 8px 7px;
    border: 2px solid #2c3038;
    border-top-width: 1px;
    border-radius: 12px;
    background: linear-gradient(#8592a3, #95a3b5 28px);
    box-shadow: 0 3px 22px rgba(0, 0, 0, 0.7);
}
.popup-head {
    display: flex;
    align-items: center;
    gap: 4px;
    height: 46px;
    color: #fff;
    font-family: "Noto Sans", Tahoma, sans-serif;
    font-size: 16px;
    font-weight: bold;
}
.popup-head span {
    margin-left: auto;
    padding-right: 2px;
}
.popup-head .tag {
    margin: 6px 0 0;
}
.students {
    display: flex;
    flex-direction: column;
    height: 193px;
    border: 1px solid #7c8796;
    background: #fff;
    color: #333;
}
.students .dark {
    color: #000;
}
.students a, .grade {
    color: #3a9ac0;
    font-weight: bold;
}
.grade {
    text-align: center;
}
.students td svg {
    width: 20px;
    height: 20px;
    margin-right: 1px;
    vertical-align: middle;
}
.s-name {
    width: 88px;
}
.s-grade {
    width: 50px;
}
.s-enroll {
    width: 75px;
}
.s-age {
    width: 36px;
}
.s-teacher {
    width: 108px;
}
.s-lunch {
    width: 69px;
}
.popup-foot {
    display: flex;
    align-items: flex-start;
    gap: 5px;
    padding-top: 1px;
    color: #fff;
    font-size: 16px;
}
.popup-foot b {
    width: 58px;
    line-height: 34px;
    font-family: "Noto Sans", Tahoma, sans-serif;
    white-space: nowrap;
}
.popup-foot .btn {
    width: 27px;
    padding: 0;
    justify-content: center;
}
.inactive {
    display: flex;
    align-items: center;
    gap: 9px;
    margin-left: auto;
    padding: 12px 2px 0 0;
}
.inactive input {
    appearance: none;
    width: 16px;
    height: 16px;
    margin-bottom: 4px;
    border: 1px solid #767676;
    border-radius: 3px;
    background: #fff;
}
```

FILE: script.js
```
const accounts = [
    ["5215", "...Store, Stan", "200.00", "", "", "", ""],
    ["5116", "..Lunch, ..", "0.00", "", "", "", ""],
    ["1384", "Adams, Belinda", "40.00", "(704) 123-5678", "(704) 123-6543", "(704) 123-1234", "Adams@email.com"],
    ["5137", "Adams, Bob", "40.00", "", "", "", "ed@praxipower.com"],
    ["4241", "Almonte , Edelnize", "100.00", "(555) 444-0101", "(555) 555-5555", "(555) 000-1234", "parent@test.com"],
    ["4711", "Arthur, Ed", "12036.20", "(444) 111-3221", "(704) 798-0081", "(555) 000-1234", "ed@praxipower.com"],
    ["5083", "Barnhart, Angel", "40.00", "", "(111) 222-1234", "", "jennifer@praxipower.com"],
    ["4314", "Best, Ashley", "100.00", "(555) 444-0101", "(555) 555-5555", "(555) 000-1234", "parent@test.com"],
    ["5245", "Bowen, Chris", "148.75", "", "(123) 123-1234", "", "cbow13mile@gmail.com"],
    ["5231", "Bowen, Stacie", "438.75", "(317) 376-3562", "(317) 376-3562", "", "stacie@praxipower.com"],
    ["5123", "Bowen, Stacie S.", "180.00", "(123) 345-5678", "(123) 123-1234", "", "stacie@praxipower.com"],
    ["5169", "Boyd, Eric", "3120.00", "", "", "", "test@test.com"],
    ["5265", "Branson, William", "348.75", "(777) 777-7777", "(888) 888-8888", "", "jennifer@praxipower.com"],
    ["5196", "Brown, Judy", "150.00", "", "", "", ""],
    ["5203", "Brown, Tom", "1295.00", "", "(123) 123-1236", "(123) 123-1478", "Tom.brown@somewhere.com"],
    ["5101", "Burch, Rebecca", "190.00", "", "", "", ""],
    ["5004", "Caldwell, Billie", "100.00", "(555) 444-0101", "(555) 555-5555", "(555) 000-1234", "parent@test.com"],
    ["1543", "Campbell, Chris", "190.00", "(555) 444-0101", "(555) 555-5555", "(555) 000-1234", ""],
    ["4537", "Carvajal, Cheira Maybe", "100.00", "(555) 444-0101", "(555) 555-5555", "(555) 000-1234", "parent@test.com"],
    ["5268", "Casey, Karen", "100.00", "", "", "", "test@test.com"],
    ["5227", "CF, Brittany Glover", "330.00", "", "", "", ""],
    ["141", "Charlton, Bruce", "0.00", "(555) 444-0101", "(555) 555-5555", "(555) 000-1234", "parent@test.com"],
    ["5154", "Chris, Pam", "700.00", "", "", "", ""],
    ["5109", "Coy, Mr", "330.00", "", "", "", ""],
    ["5237", "Cravens, Mark", "100.00", "", "", "", ""],
    ["", "", "", "", "", "", ""]
];
const untagged = ["141"];
const selectedId = "1384";

const body = document.getElementById("accounts");
accounts.forEach(function (account) {
    const row = document.createElement("tr");
    if (account[0] === selectedId) {
        row.classList.add("selected");
    }

    const tagCell = document.createElement("td");
    const tag = document.createElement("input");
    tag.type = "checkbox";
    tag.className = "tag";
    tag.checked = !untagged.includes(account[0]);
    tag.setAttribute("aria-label", "Tag " + account[1]);
    tagCell.appendChild(tag);
    row.appendChild(tagCell);

    account.forEach(function (value, i) {
        const cell = document.createElement("td");
        cell.textContent = value;
        if (i === 0 || i === 2) {
            cell.className = "num";
        }
        row.appendChild(cell);
    });
    row.appendChild(document.createElement("td"));
    body.appendChild(row);
});

// start part way into the first row
document.getElementById("gridScroll").scrollTop = 12;

// cursor goes at the end of the search text
const find = document.getElementById("find");
find.focus();
find.setSelectionRange(find.value.length, find.value.length);
```
